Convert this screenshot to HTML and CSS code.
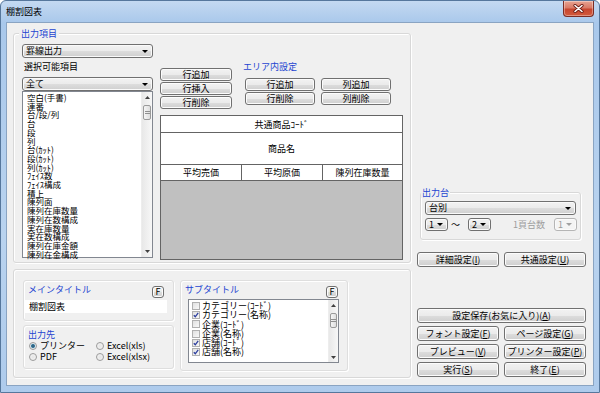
FILE: index.html
```html
<!DOCTYPE html>
<html lang="ja">
<head>
  <meta charset="UTF-8">
  <title>棚割図表</title>
  <link rel="stylesheet" href="styles.css">
</head>
<body>

  <div class="janela">
    <div class="titlebar">
      <span class="title">棚割図表</span>
      <div class="btn-close">
        <svg width="11" height="9" viewBox="0 0 11 9"><path d="M2 1.5 L9 7.5 M9 1.5 L2 7.5" stroke="#6a1a12" stroke-width="3.2" stroke-linecap="round"/><path d="M2 1.5 L9 7.5 M9 1.5 L2 7.5" stroke="#fff" stroke-width="1.6" stroke-linecap="round"/></svg>
      </div>
    </div>

    <div class="client">

      <div class="col-left">
        <div class="group main-group">
          <div class="group-label">出力項目</div>
          <div class="main-body">

            <div class="items-col">
              <div class="combo">罫線出力</div>
              <div class="sub-label">選択可能項目</div>
              <div class="combo">全て</div>
              <div class="listbox items-list">
                <ul>
                  <li>空白(手書)</li>
                  <li>連番</li>
                  <li>台/段/列</li>
                  <li>台</li>
                  <li>段</li>
                  <li>列</li>
                  <li>台(ｶｯﾄ)</li>
                  <li>段(ｶｯﾄ)</li>
                  <li>列(ｶｯﾄ)</li>
                  <li>ﾌｪｲｽ数</li>
                  <li>ﾌｪｲｽ構成</li>
                  <li>積上</li>
                  <li>陳列面</li>
                  <li>陳列在庫数量</li>
                  <li>陳列在数構成</li>
                  <li>実在庫数量</li>
                  <li>実在数構成</li>
                  <li>陳列在庫金額</li>
                  <li>陳列在金構成</li>
                </ul>
                <div class="scrollbar">
                  <div class="sb-arrow"><svg width="5" height="3"><polygon points="0,3 5,3 2.5,0" fill="#404040"/></svg></div>
                  <div class="sb-thumb"></div>
                  <div class="sb-space"></div>
                  <div class="sb-arrow"><svg width="5" height="3"><polygon points="0,0 5,0 2.5,3" fill="#404040"/></svg></div>
                </div>
              </div>
            </div>

            <div class="layout-col">
              <div class="layout-top">
                <div class="row-btns">
                  <button class="btn">行追加</button>
                  <button class="btn">行挿入</button>
                  <button class="btn">行削除</button>
                </div>
                <div class="area-group">
                  <div class="group-label">エリア内設定</div>
                  <div class="area-btns">
                    <button class="btn">行追加</button>
                    <button class="btn">列追加</button>
                    <button class="btn">行削除</button>
                    <button class="btn">列削除</button>
                  </div>
                </div>
              </div>

              <div class="grid-table">
                <div class="cell full">共通商品ｺｰﾄﾞ</div>
                <div class="cell full">商品名</div>
                <div class="cell">平均売価</div>
                <div class="cell">平均原価</div>
                <div class="cell last">陳列在庫数量</div>
                <div class="cell full empty"></div>
              </div>
            </div>

          </div>
        </div>

        <div class="group bottom-group">
          <div class="bottom-left">
            <div class="box title-box">
              <div class="box-head">
                <span class="blue">メインタイトル</span>
                <button class="btn btn-f">F</button>
              </div>
              <div class="textbox">棚割図表</div>
            </div>
            <div class="box dest-box">
              <div class="box-head"><span class="blue">出力先</span></div>
              <div class="radios">
                <label><span class="radio on"></span>プリンター</label>
                <label><span class="radio"></span>Excel(xls)</label>
                <label><span class="radio"></span>PDF</label>
                <label><span class="radio"></span>Excel(xlsx)</label>
              </div>
            </div>
          </div>

          <div class="box subtitle-box">
            <div class="box-head">
              <span class="blue">サブタイトル</span>
              <button class="btn btn-f">F</button>
            </div>
            <div class="listbox check-list">
              <ul>
                <li><span class="chk"></span>カテゴリー(ｺｰﾄﾞ)</li>
                <li><span class="chk"><svg width="6" height="6" viewBox="0 0 6 6"><path d="M0.8 3.2 L2.3 4.8 L5.2 0.8" fill="none" stroke="#2d3f9e" stroke-width="1.3"/></svg></span>カテゴリー(名称)</li>
                <li><span class="chk"></span>企業(ｺｰﾄﾞ)</li>
                <li><span class="chk"></span>企業(名称)</li>
                <li><span class="chk"><svg width="6" height="6" viewBox="0 0 6 6"><path d="M0.8 3.2 L2.3 4.8 L5.2 0.8" fill="none" stroke="#2d3f9e" stroke-width="1.3"/></svg></span>店舗(ｺｰﾄﾞ)</li>
                <li><span class="chk"><svg width="6" height="6" viewBox="0 0 6 6"><path d="M0.8 3.2 L2.3 4.8 L5.2 0.8" fill="none" stroke="#2d3f9e" stroke-width="1.3"/></svg></span>店舗(名称)</li>
              </ul>
              <div class="scrollbar small">
                <div class="sb-arrow"><svg width="5" height="3"><polygon points="0,3 5,3 2.5,0" fill="#404040"/></svg></div>
                <div class="sb-thumb"></div>
                <div class="sb-space"></div>
                <div class="sb-arrow"><svg width="5" height="3"><polygon points="0,0 5,0 2.5,3" fill="#404040"/></svg></div>
              </div>
            </div>
          </div>
        </div>
      </div>

      <div class="col-right">
        <div class="group dai-group">
          <div class="group-label">出力台</div>
          <div class="combo dai-combo">台別</div>
          <div class="dai-row">
            <div class="combo mini">1</div>
            <span class="tilde">〜</span>
            <div class="combo mini">2</div>
            <span class="disabled-text">1頁台数</span>
            <div class="combo mini off">1</div>
          </div>
        </div>

        <div class="btn-grid top-btns">
          <button class="btn">詳細設定(<u>I</u>)</button>
          <button class="btn">共通設定(<u>U</u>)</button>
        </div>

        <button class="btn btn-save">設定保存(お気に入り)(<u>A</u>)</button>

        <div class="btn-grid bottom-btns">
          <button class="btn">フォント設定(<u>F</u>)</button>
          <button class="btn">ページ設定(<u>G</u>)</button>
          <button class="btn">プレビュー(<u>V</u>)</button>
          <button class="btn">プリンター設定(<u>P</u>)</button>
          <button class="btn">実行(<u>S</u>)</button>
          <button class="btn">終了(<u>E</u>)</button>
        </div>
      </div>

    </div>
  </div>

</body>
</html>
```

FILE: styles.css
```css
* {
  box-sizing: border-box;
}

body {
  margin: 0;
  font-family: "Noto Sans CJK JP", "Noto Sans", sans-serif;
  font-size: 9px;
  color: #000;
  background: #fff;
}

ul {
  margin: 0;
  padding: 0;
  list-style: none;
}

.janela {
  width: 600px;
  height: 393px;
  display: flex;
  flex-direction: column;
  border: 1px solid #56779c;
  border-radius: 6px 6px 0 0;
  background: linear-gradient(to bottom, #c4d9f1 0px, #a9c8eb 22px, #b9d3ef 60%, #aecbec 100%);
  overflow: hidden;
}

.titlebar {
  height: 21px;
  display: flex;
  justify-content: space-between;
  align-items: flex-start;
  padding-left: 5px;
}

.title {
  line-height: 11px;
  margin-top: 5px;
}

.btn-close {
  width: 31px;
  height: 16px;
  margin-right: 5px;
  border: 1px solid #7b2c24;
  border-top: none;
  border-radius: 0 0 4px 4px;
  background: linear-gradient(to bottom, #e8a493 0%, #d97a66 45%, #c8462f 55%, #d25a3c 100%);
  box-shadow: inset 0 0 0 1px rgba(255,255,255,0.35);
  display: flex;
  align-items: center;
  justify-content: center;
}

.client {
  flex: 1;
  margin: 0 5px 6px;
  background: #f0f0f0;
  border: 1px solid #8aa4c2;
  display: flex;
  padding: 10px 0 0 6px;
}

.col-left {
  width: 398px;
}

.group {
  border: 1px solid #d8d8d8;
  border-radius: 3px;
  box-shadow: inset 1px 1px 0 #fff, 1px 1px 0 #fff;
}

.group-label {
  display: table;
  height: 11px;
  line-height: 11px;
  margin: -6px 0 0 5px;
  padding: 0 2px;
  background: #f0f0f0;
  color: #1d44d0;
}

.blue {
  color: #1d44d0;
}

.main-group {
  height: 230px;
}

.main-body {
  display: flex;
  align-items: flex-start;
  margin-top: 5px;
  padding-left: 8px;
}

.items-col {
  width: 131px;
}

.combo {
  height: 14px;
  line-height: 12px;
  border: 1px solid #707070;
  border-radius: 3px;
  background: linear-gradient(to bottom, #f2f2f2 0%, #ebebeb 50%, #dddddd 51%, #cfcfcf 100%);
  box-shadow: inset 0 0 0 1px #fafafa;
  padding: 0 4px 0 3px;
  display: flex;
  justify-content: space-between;
  align-items: center;
}

.combo::after {
  content: "";
  border-left: 3px solid transparent;
  border-right: 3px solid transparent;
  border-top: 3px solid #000;
}

.sub-label {
  height: 11px;
  line-height: 11px;
  margin: 3px 0 5px 2px;
}

.listbox {
  display: flex;
  background: #fff;
  border: 1px solid #828790;
}

.listbox ul {
  flex: 1;
}

.items-list {
  height: 167px;
}

/* rows are packed tight like the original control */
.items-list ul {
  padding: 1px 0 0 4px;
  font-size: 8.5px;
  line-height: 8.7px;
}

.scrollbar {
  width: 11px;
  display: flex;
  flex-direction: column;
  background: linear-gradient(to right, #e8e8e8, #f7f7f7);
  border-left: 1px solid #ededed;
}

.sb-arrow {
  height: 11px;
  display: flex;
  align-items: center;
  justify-content: center;
}

.sb-thumb {
  height: 15px;
  margin: 2px 1px 0;
  border: 1px solid #9a9a9a;
  border-radius: 2px;
  background:
    linear-gradient(to bottom, transparent 5px, #8f8f8f 5px, #8f8f8f 6px, transparent 6px, transparent 7px, #8f8f8f 7px, #8f8f8f 8px, transparent 8px) center / 5px 100% no-repeat,
    linear-gradient(to right, #f5f5f5, #dedede);
}

.sb-space {
  flex: 1;
}

.layout-col {
  width: 243px;
  margin-left: 7px;
  display: flex;
  flex-direction: column;
}

.layout-top {
  height: 53px;
  margin-top: 18px;
  display: flex;
  align-items: flex-start;
}

.btn {
  font-family: inherit;
  font-size: 9px;
  color: #000;
  height: 13px;
  padding: 0;
  line-height: 11px;
  border: 1px solid #707070;
  border-radius: 3px;
  background: linear-gradient(to bottom, #f2f2f2 0%, #ebebeb 50%, #dddddd 51%, #cfcfcf 100%);
  box-shadow: inset 0 0 0 1px #fcfcfc;
}

.row-btns {
  width: 72px;
  margin-top: 6px;
  display: flex;
  flex-direction: column;
  gap: 1px;
}

.area-group {
  width: 161px;
  height: 42px;
  margin: 5px 0 0 8px;
}

.area-group .group-label {
  margin-left: 1px;
}

.area-btns {
  display: grid;
  grid-template-columns: 70px 70px;
  gap: 1px 6px;
  margin: 6px 0 0 5px;
}

.grid-table {
  height: 145px;
  border: 1px solid #646464;
  display: grid;
  grid-template-columns: 81px 81px 1fr;
  grid-template-rows: 17px 32px 16px 1fr;
  background: #fff;
}

.cell {
  border-right: 1px solid #646464;
  border-bottom: 1px solid #646464;
  display: flex;
  align-items: center;
  justify-content: center;
}

.cell.full {
  grid-column: 1 / 4;
  border-right: none;
}

.cell.last {
  border-right: none;
}

.cell.empty {
  background: #c0c0c0;
  border-bottom: none;
}

.bottom-group {
  height: 109px;
  margin-top: 6px;
  display: flex;
  align-items: flex-start;
  padding: 10px 0 0 9px;
}

.bottom-left {
  width: 151px;
}

.box {
  border: 1px solid #dedede;
  border-radius: 3px;
  box-shadow: inset 1px 1px 0 #fff, 1px 1px 0 #fff;
}

.box-head {
  display: flex;
  justify-content: space-between;
  align-items: flex-start;
  padding: 3px 9px 0 4px;
  line-height: 11px;
}

.btn-f {
  width: 12px;
  height: 12px;
  margin-top: 2px;
  line-height: 10px;
}

.title-box {
  height: 41px;
}

.textbox {
  width: 142px;
  height: 13px;
  line-height: 13px;
  margin: 2px 0 0 1px;
  padding-left: 4px;
  background: #fff;
}

.dest-box {
  height: 44px;
  margin-top: 4px;
}

.radios {
  display: grid;
  grid-template-columns: 67px auto;
  padding-left: 5px;
  line-height: 11px;
}

.radios label {
  display: flex;
  align-items: center;
  gap: 3px;
}

.radio {
  width: 8px;
  height: 8px;
  border-radius: 50%;
  border: 1px solid #9a9a9a;
  background: radial-gradient(circle, #e4e4e4, #f8f8f8);
}

.radio.on {
  background: radial-gradient(circle, #2a4f6e 0, #3d7c9c 1.6px, #dfe8ee 2.4px, #f4f4f4 100%);
}

.subtitle-box {
  width: 168px;
  height: 91px;
  margin-left: 6px;
}

.check-list {
  width: 151px;
  height: 64px;
  margin: 1px 0 0 7px;
}

.check-list ul {
  padding: 1px 0 0 3px;
  line-height: 9.3px;
}

.check-list li {
  display: flex;
  align-items: center;
  gap: 2px;
}

.chk {
  width: 8px;
  height: 8px;
  border: 1px solid #b0b0b0;
  background: linear-gradient(135deg, #e0e0e0, #f8f8f8);
  display: flex;
  align-items: center;
  justify-content: center;
}

.scrollbar.small {
  width: 10px;
}

.scrollbar.small .sb-arrow {
  height: 10px;
}

.scrollbar.small .sb-thumb {
  margin-top: 3px;
}

.col-right {
  width: 169px;
  margin-left: 6px;
  display: flex;
  flex-direction: column;
}

.dai-group {
  width: 161px;
  height: 48px;
  margin: 159px 0 0 3px;
}

.dai-group .group-label {
  margin-left: 0;
  padding: 0 1px;
}

.dai-combo {
  width: 151px;
  margin: 3px 0 0 4px;
}

.dai-row {
  display: flex;
  align-items: center;
  margin: 3px 0 0 4px;
}

.combo.mini {
  width: 23px;
  height: 13px;
}

.combo.off {
  color: #9a9a9a;
  border-color: #b5b5b5;
  background: #f4f4f4;
}

.combo.off::after {
  border-top-color: #a0a0a0;
}

.tilde {
  width: 20px;
  padding-left: 3px;
}

.disabled-text {
  color: #9d9d9d;
  margin: 0 9px 0 22px;
}

.btn-grid {
  display: grid;
  grid-template-columns: 1fr 1fr;
  gap: 3px 5px;
}

.btn-grid .btn {
  height: 15px;
}

.top-btns {
  margin-top: 12px;
}

.btn-save {
  height: 15px;
  margin-top: 41px;
}

.bottom-btns {
  margin-top: 3px;
}
```
